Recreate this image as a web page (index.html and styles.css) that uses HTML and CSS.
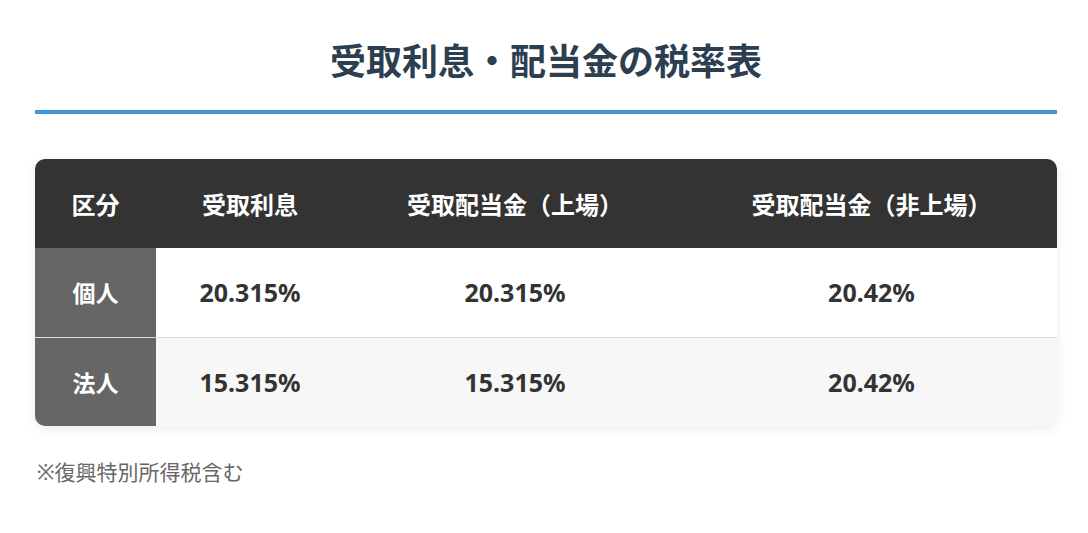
FILE: index.html
```html
<!DOCTYPE html>
<html lang="ja">
<head>
<meta charset="utf-8">
<link rel="stylesheet" href="styles.css">
</head>
<body>
<div class="page">
  <h1 class="title">受取利息・配当金の税率表</h1>
  <div class="table-wrap">
    <table class="rates">
      <colgroup>
        <col class="c1"><col class="c2"><col class="c3"><col class="c4">
      </colgroup>
      <thead>
        <tr><th>区分</th><th>受取利息</th><th>受取配当金（上場）</th><th>受取配当金（非上場）</th></tr>
      </thead>
      <tbody>
        <tr><th class="rowhead">個人</th><td>20.315%</td><td>20.315%</td><td>20.42%</td></tr>
        <tr class="alt"><th class="rowhead">法人</th><td>15.315%</td><td>15.315%</td><td>20.42%</td></tr>
      </tbody>
    </table>
  </div>
  <p class="note">※復興特別所得税含む</p>
</div>
</body>
</html>
```
FILE: styles.css
```css
* { box-sizing: border-box; }
body {
  margin: 0;
  background: #fff;
  font-family: "Noto Sans", "Noto Sans CJK JP", sans-serif;
}
.page {
  width: 1022px;
  margin-left: 35px;
  padding-top: 36px;
}
.title {
  margin: 0;
  text-align: center;
  font-size: 36px;
  font-weight: 700;
  color: #2c3e50;
  line-height: 52px;
  padding-bottom: 22px;
  border-bottom: 4px solid #3f97da;
}
.table-wrap {
  margin-top: 45px;
  border-radius: 10px;
  overflow: hidden;
  box-shadow: 0 3px 12px rgba(0,0,0,0.08);
}
.rates {
  width: 100%;
  border-collapse: collapse;
  table-layout: fixed;
}
.c1 { width: 121px; }
.c2 { width: 188px; }
.c3 { width: 342px; }
.c4 { width: 371px; }
.rates thead th {
  background: #333;
  color: #fff;
  font-size: 24px;
  font-weight: 700;
  height: 89px;
  padding: 0;
  text-align: center;
}
.rates tbody th.rowhead {
  background: #666;
  color: #fff;
  font-size: 23px;
  font-weight: 700;
  padding: 0;
}
.rates tbody td {
  height: 89px;
  text-align: center;
  font-size: 25px;
  font-weight: 700;
  color: #333;
  padding: 0;
  background: #fff;
}
.rates tbody tr.alt td { background: #f7f7f7; }
.rates tbody tr.alt td, .rates tbody tr.alt th { border-top: 1px solid #ddd; }
.note {
  margin: 30px 0 0 2px;
  font-size: 21px;
  color: #666;
}
```
